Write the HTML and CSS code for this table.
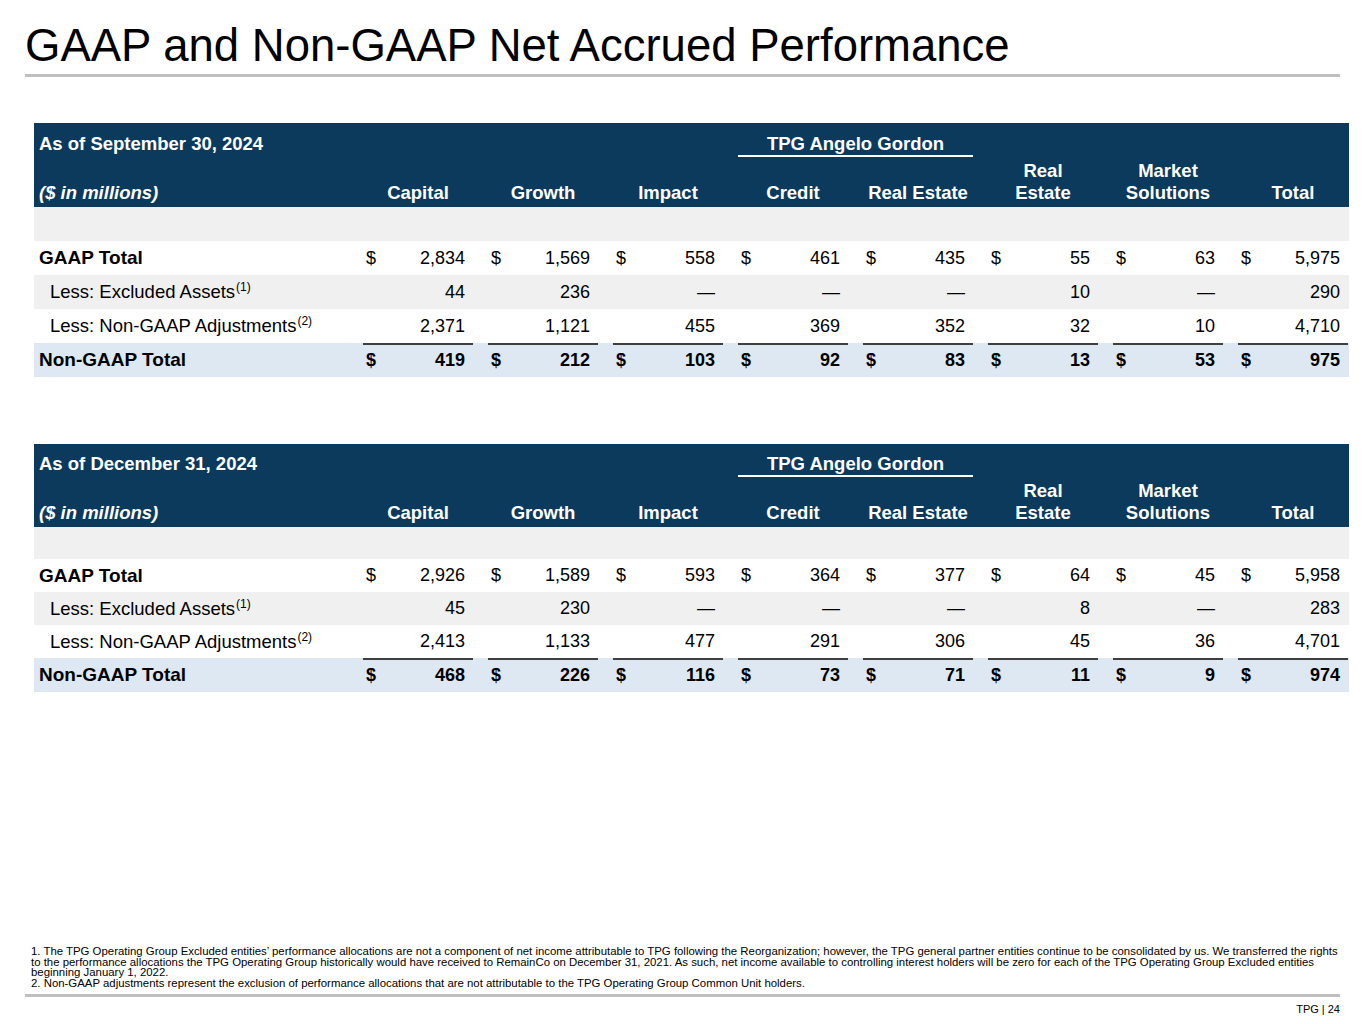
FILE: index.html
```html
<!DOCTYPE html>
<html lang="en">
<head>
<meta charset="utf-8">
<title>GAAP and Non-GAAP Net Accrued Performance</title>
<link rel="stylesheet" href="styles.css">
</head>
<body>
<div class="page">
  <h1 class="title">GAAP and Non-GAAP Net Accrued Performance</h1>
  <div class="rule"></div>

  <section class="tbl tbl-first">
    <div class="thead">
      <div class="hd-as">As of September 30, 2024</div>
      <div class="hd-group">TPG Angelo Gordon</div>
      <div class="hd-units">($ in millions)</div>
      <div class="hd-col">Capital</div>
      <div class="hd-col">Growth</div>
      <div class="hd-col">Impact</div>
      <div class="hd-col">Credit</div>
      <div class="hd-col">Real Estate</div>
      <div class="hd-col">Real<br>Estate</div>
      <div class="hd-col">Market<br>Solutions</div>
      <div class="hd-col">Total</div>
    </div>
    <div class="row row-spacer"></div>
    <div class="row">
      <div class="lbl lbl-bold">GAAP Total</div>
      <div class="cell"><span class="cur">$</span><span class="num">2,834</span></div>
      <div class="cell"><span class="cur">$</span><span class="num">1,569</span></div>
      <div class="cell"><span class="cur">$</span><span class="num">558</span></div>
      <div class="cell"><span class="cur">$</span><span class="num">461</span></div>
      <div class="cell"><span class="cur">$</span><span class="num">435</span></div>
      <div class="cell"><span class="cur">$</span><span class="num">55</span></div>
      <div class="cell"><span class="cur">$</span><span class="num">63</span></div>
      <div class="cell"><span class="cur">$</span><span class="num">5,975</span></div>
    </div>
    <div class="row row-gray">
      <div class="lbl lbl-sub">Less: Excluded Assets<sup class="fn">(1)</sup></div>
      <div class="cell"><span class="num">44</span></div>
      <div class="cell"><span class="num">236</span></div>
      <div class="cell"><span class="num">—</span></div>
      <div class="cell"><span class="num">—</span></div>
      <div class="cell"><span class="num">—</span></div>
      <div class="cell"><span class="num">10</span></div>
      <div class="cell"><span class="num">—</span></div>
      <div class="cell"><span class="num">290</span></div>
    </div>
    <div class="row">
      <div class="lbl lbl-sub">Less: Non-GAAP Adjustments<sup class="fn">(2)</sup></div>
      <div class="cell"><span class="num">2,371</span></div>
      <div class="cell"><span class="num">1,121</span></div>
      <div class="cell"><span class="num">455</span></div>
      <div class="cell"><span class="num">369</span></div>
      <div class="cell"><span class="num">352</span></div>
      <div class="cell"><span class="num">32</span></div>
      <div class="cell"><span class="num">10</span></div>
      <div class="cell"><span class="num">4,710</span></div>
    </div>
    <div class="row row-total">
      <div class="lbl lbl-bold">Non-GAAP Total</div>
      <div class="cell"><span class="cur">$</span><span class="num">419</span></div>
      <div class="cell"><span class="cur">$</span><span class="num">212</span></div>
      <div class="cell"><span class="cur">$</span><span class="num">103</span></div>
      <div class="cell"><span class="cur">$</span><span class="num">92</span></div>
      <div class="cell"><span class="cur">$</span><span class="num">83</span></div>
      <div class="cell"><span class="cur">$</span><span class="num">13</span></div>
      <div class="cell"><span class="cur">$</span><span class="num">53</span></div>
      <div class="cell"><span class="cur">$</span><span class="num">975</span></div>
    </div>
  </section>

  <section class="tbl tbl-second">
    <div class="thead">
      <div class="hd-as">As of December 31, 2024</div>
      <div class="hd-group">TPG Angelo Gordon</div>
      <div class="hd-units">($ in millions)</div>
      <div class="hd-col">Capital</div>
      <div class="hd-col">Growth</div>
      <div class="hd-col">Impact</div>
      <div class="hd-col">Credit</div>
      <div class="hd-col">Real Estate</div>
      <div class="hd-col">Real<br>Estate</div>
      <div class="hd-col">Market<br>Solutions</div>
      <div class="hd-col">Total</div>
    </div>
    <div class="row row-spacer"></div>
    <div class="row">
      <div class="lbl lbl-bold">GAAP Total</div>
      <div class="cell"><span class="cur">$</span><span class="num">2,926</span></div>
      <div class="cell"><span class="cur">$</span><span class="num">1,589</span></div>
      <div class="cell"><span class="cur">$</span><span class="num">593</span></div>
      <div class="cell"><span class="cur">$</span><span class="num">364</span></div>
      <div class="cell"><span class="cur">$</span><span class="num">377</span></div>
      <div class="cell"><span class="cur">$</span><span class="num">64</span></div>
      <div class="cell"><span class="cur">$</span><span class="num">45</span></div>
      <div class="cell"><span class="cur">$</span><span class="num">5,958</span></div>
    </div>
    <div class="row row-gray">
      <div class="lbl lbl-sub">Less: Excluded Assets<sup class="fn">(1)</sup></div>
      <div class="cell"><span class="num">45</span></div>
      <div class="cell"><span class="num">230</span></div>
      <div class="cell"><span class="num">—</span></div>
      <div class="cell"><span class="num">—</span></div>
      <div class="cell"><span class="num">—</span></div>
      <div class="cell"><span class="num">8</span></div>
      <div class="cell"><span class="num">—</span></div>
      <div class="cell"><span class="num">283</span></div>
    </div>
    <div class="row">
      <div class="lbl lbl-sub">Less: Non-GAAP Adjustments<sup class="fn">(2)</sup></div>
      <div class="cell"><span class="num">2,413</span></div>
      <div class="cell"><span class="num">1,133</span></div>
      <div class="cell"><span class="num">477</span></div>
      <div class="cell"><span class="num">291</span></div>
      <div class="cell"><span class="num">306</span></div>
      <div class="cell"><span class="num">45</span></div>
      <div class="cell"><span class="num">36</span></div>
      <div class="cell"><span class="num">4,701</span></div>
    </div>
    <div class="row row-total">
      <div class="lbl lbl-bold">Non-GAAP Total</div>
      <div class="cell"><span class="cur">$</span><span class="num">468</span></div>
      <div class="cell"><span class="cur">$</span><span class="num">226</span></div>
      <div class="cell"><span class="cur">$</span><span class="num">116</span></div>
      <div class="cell"><span class="cur">$</span><span class="num">73</span></div>
      <div class="cell"><span class="cur">$</span><span class="num">71</span></div>
      <div class="cell"><span class="cur">$</span><span class="num">11</span></div>
      <div class="cell"><span class="cur">$</span><span class="num">9</span></div>
      <div class="cell"><span class="cur">$</span><span class="num">974</span></div>
    </div>
  </section>

  <footer class="foot">
    <p class="notes">1. The TPG Operating Group Excluded entities’ performance allocations are not a component of net income attributable to TPG following the Reorganization; however, the TPG general partner entities continue to be consolidated by us. We transferred the rights<br>to the performance allocations the TPG Operating Group historically would have received to RemainCo on December 31, 2021. As such, net income available to controlling interest holders will be zero for each of the TPG Operating Group Excluded entities<br>beginning January 1, 2022.<br>2. Non-GAAP adjustments represent the exclusion of performance allocations that are not attributable to the TPG Operating Group Common Unit holders.</p>
    <div class="foot-rule"></div>
    <div class="pageno">TPG | 24</div>
  </footer>
</div>
</body>
</html>
```

FILE: styles.css
```css
* { box-sizing: border-box; }

html, body {
  margin: 0;
  padding: 0;
  background: #ffffff;
}

body {
  font-family: "Liberation Sans", Arial, sans-serif;
  color: #000000;
}

.page {
  width: 1365px;
  height: 1024px;
  display: flex;
  flex-direction: column;
}

.title {
  margin: 20px 0 0 25px;
  font-size: 45.5px;
  line-height: 52px;
  font-weight: normal;
  color: #000000;
}

.rule {
  margin: 2px 25px 0 25px;
  height: 3px;
  background: #bfbfbf;
}

/* ---------- tables ---------- */
.tbl {
  --cols: 327px repeat(7, 125px) 113px;
  width: 1315px;
  margin-left: 34px;
  font-size: 18.5px;
}

.tbl-first { margin-top: 46px; }
.tbl-second { margin-top: 67px; }

.thead {
  display: grid;
  grid-template-columns: var(--cols);
  grid-template-rows: 42px 42px;
  background: #0b3a5d;
  color: #ffffff;
  font-weight: bold;
}

.hd-as {
  grid-column: 1;
  grid-row: 1;
  align-self: start;
  margin-top: 10px;
  padding-left: 5px;
  line-height: 22px;
}

.hd-group {
  grid-column: 5 / 7;
  grid-row: 1;
  align-self: start;
  margin: 10px 13px 0 2px;
  line-height: 22px;
  text-align: center;
  border-bottom: 2px solid #ffffff;
}

.hd-units {
  grid-column: 1;
  grid-row: 2;
  align-self: end;
  padding: 0 0 3px 5px;
  line-height: 22px;
  font-style: italic;
}

.hd-col {
  grid-row: 2;
  align-self: end;
  width: 110px;
  margin-left: 2px;
  padding-bottom: 3px;
  line-height: 22px;
  text-align: center;
}

.row {
  display: grid;
  grid-template-columns: var(--cols);
  height: 34px;
  align-items: stretch;
}

.row-spacer { background: #f0f0f0; }
.row-gray { background: #f0f0f0; }
.row-total { background: #dde8f3; font-weight: bold; }

.lbl {
  line-height: 34px;
  white-space: nowrap;
}

.lbl-bold { padding-left: 5px; font-weight: bold; font-size: 19px; }
.lbl-sub { padding-left: 16px; }

.fn {
  font-size: 12px;
  line-height: 0;
  vertical-align: 7px;
  margin-left: 1px;
}

.cell {
  width: 110px;
  margin-left: 2px;
  display: flex;
  align-items: center;
  justify-content: space-between;
  padding: 0 8px 0 3px;
  font-size: 18px;
}

.row-total .cell { border-top: 2px solid #3f3f3f; padding-bottom: 2px; }

.num { margin-left: auto; }

/* second table is slightly more compact */
.tbl-second .thead { grid-template-rows: 41px 42px; }
.tbl-second .hd-as,
.tbl-second .hd-group { margin-top: 9px; }
.tbl-second .row { height: 33px; }
.tbl-second .lbl { line-height: 33px; }
.tbl-second .row-spacer { height: 32px; }
.tbl-second .row-total { height: 34px; }
.tbl-second .row-total .lbl { line-height: 34px; }

/* ---------- footer ---------- */
.foot {
  margin-top: auto;
  padding: 0 25px 8px 25px;
}

.notes {
  margin: 0;
  padding-left: 6px;
  font-size: 11.4px;
  line-height: 10.4px;
  color: #000000;
  white-space: nowrap;
}

.foot-rule {
  margin-top: 6px;
  height: 3px;
  background: #bfbfbf;
}

.pageno {
  margin-top: 6px;
  text-align: right;
  font-size: 11px;
  line-height: 13px;
}
```
